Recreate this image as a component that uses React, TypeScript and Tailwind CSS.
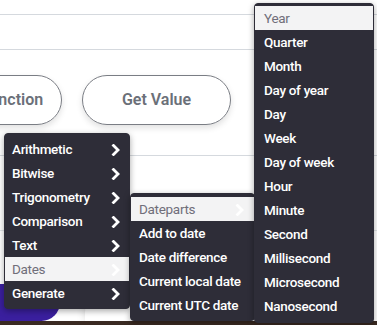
import React from "react";

const Chevron = ({ className = "" }: { className?: string }) => (
  <svg width="10" height="12" viewBox="0 0 10 12" className={`shrink-0 ${className}`}>
    <polyline points="2.5,1.5 7,6 2.5,10.5" fill="none" stroke="currentColor" strokeWidth="2.8" strokeLinecap="square" />
  </svg>
);

type Item = { label: string; sub?: boolean; active?: boolean };

const Menu = ({ items, className, pad }: { items: Item[]; className: string; pad: string }) => (
  <div className={`absolute bg-[#2e2d38] border border-[#2e2d38] rounded-[4px] shadow-[0_2px_6px_rgba(0,0,0,0.35)] ${className}`}>
    {items.map((it) => (
      <div
        key={it.label}
        className={`h-[24px] pt-[2px] flex items-center justify-between whitespace-nowrap ${pad} ${
          it.active ? "bg-[#f3f3f4] text-[#706e7a] font-normal" : "text-white"
        }`}
      >
        <span className="leading-none">{it.label}</span>
        {it.sub && <Chevron className="text-white" />}
      </div>
    ))}
  </div>
);

export default function App() {
  const m1: Item[] = [
    { label: "Arithmetic", sub: true },
    { label: "Bitwise", sub: true },
    { label: "Trigonometry", sub: true },
    { label: "Comparison", sub: true },
    { label: "Text", sub: true },
    { label: "Dates", sub: true, active: true },
    { label: "Generate", sub: true },
  ];
  const m2: Item[] = [
    { label: "Dateparts", sub: true, active: true },
    { label: "Add to date" },
    { label: "Date difference" },
    { label: "Current local date" },
    { label: "Current UTC date" },
  ];
  const m3: Item[] = [
    "Year",
    "Quarter",
    "Month",
    "Day of year",
    "Day",
    "Week",
    "Day of week",
    "Hour",
    "Minute",
    "Second",
    "Millisecond",
    "Microsecond",
    "Nanosecond",
  ].map((l, i) => ({ label: l, active: i === 0 }));

  return (
    <div
      className="relative w-[377px] h-[325px] overflow-hidden bg-white text-[13.5px] tracking-[-0.3px]"
      style={{ fontFamily: "Roboto, 'Noto Sans', sans-serif" }}
    >
      {/* background page */}
      <div className="flex flex-col h-full">
        <div className="h-[15px] border-b border-[#d5d9de] shrink-0" />
        <div className="h-[35px] border-b border-[#d5d9de] shrink-0" />
        <div className="h-[106px] border-b border-[#d5d9de] shrink-0 pt-[25px] flex gap-[20px]">
          <div className="ml-[-38px] w-[100px] h-[50px] rounded-full border border-[#7a7d84] shadow-[0_3px_6px_rgba(0,0,0,0.12)] flex items-center justify-center text-[16px] tracking-normal font-semibold text-[#6b7079]">
            Function
          </div>
          <div className="w-[149px] h-[50px] rounded-full border border-[#7a7d84] shadow-[0_3px_6px_rgba(0,0,0,0.12)] flex items-center justify-center text-[16px] tracking-normal font-semibold text-[#6b7079]">
            Get Value
          </div>
        </div>
        <div className="h-[75px] border-b border-[#e2e5e8] shrink-0" />
        <div className="flex-1 flex items-end gap-[25px]">
          <div className="w-[60px] h-[37px] rounded-r-[30px] bg-[#3a1f9e]" />
          <div className="w-[48px] h-[33px] rounded-t-[24px] bg-white shadow-[0_0_8px_rgba(0,0,0,0.15)]" />
        </div>
        <div className="h-[4px] bg-[#3a2a22] shrink-0" />
      </div>

      {/* menus */}
      <Menu items={m1} className="left-[4px] top-[133px] w-[126px] py-[3px] font-medium" pad="pl-[7px] pr-[8px]" />
      <Menu items={m2} className="left-[130px] top-[193px] w-[125px] py-[3px] font-medium" pad="pl-[8px] pr-[9px]" />
      <Menu items={m3} className="left-[254px] top-[3px] w-[120px] pt-[2px] pb-[4px] font-medium" pad="pl-[9px] pr-[6px]" />
    </div>
  );
}
